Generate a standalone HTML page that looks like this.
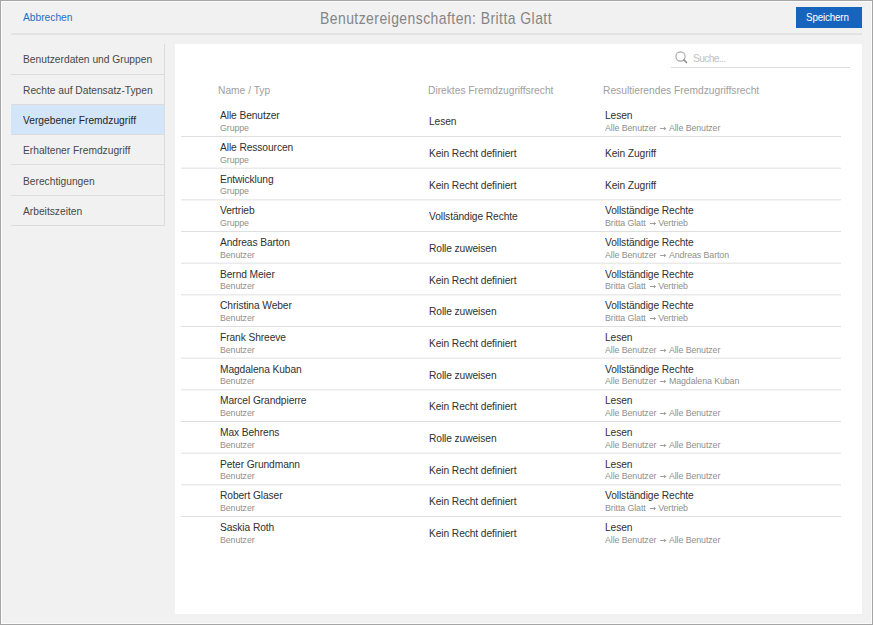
<!DOCTYPE html>
<html><head><meta charset="utf-8"><style>
html,body{margin:0;padding:0;}
body{width:873px;height:625px;overflow:hidden;position:relative;background:#f1f1f1;font-family:"Liberation Sans",sans-serif;}
.frame{position:absolute;left:0;top:0;width:871px;height:623px;border:1px solid #a5a5a5;}
.frame2{position:absolute;left:1px;top:1px;width:869px;height:621px;border:1px solid #fbfbfb;}
.t{position:absolute;white-space:nowrap;line-height:1;}
.hl{position:absolute;height:1px;}
.vl{position:absolute;width:1px;}
.abb{color:#1f6fc6;letter-spacing:0px;transform:scaleX(0.93);transform-origin:0 0;}
.title{color:#858585;letter-spacing:0.55px;transform:scaleX(0.82);transform-origin:0 0;}
.btn{position:absolute;left:796px;top:7px;width:66px;height:21px;background:#1764be;}
.btxt{color:#fff;letter-spacing:-0.2px;transform:scaleX(0.93);transform-origin:0 0;}
.selt{color:#262626 !important;}
.side{color:#484848;letter-spacing:0px;transform:scaleX(0.93);transform-origin:0 0;}
.hdr{color:#9e9e9e;letter-spacing:0px;transform:scaleX(0.93);transform-origin:0 0;}
.nm{color:#303030;letter-spacing:-0.1px;transform:scaleX(0.93);transform-origin:0 0;}
.sub{color:#8f8f8f;letter-spacing:-0.1px;transform:scaleX(0.93);transform-origin:0 0;}
.arr{vertical-align:0px;}
.ph{color:#c0c0c0;letter-spacing:-0.7px;transform:scaleX(0.93);transform-origin:0 0;}
</style></head><body>
<div class="frame"></div><div class="frame2"></div>

<div class="t abb" style="left:22.6px;top:11.69px;font-size:11px;">Abbrechen</div>
<div class="t title" style="left:320px;top:10.31px;font-size:17px;">Benutzereigenschaften: Britta Glatt</div>
<div class="btn"></div>
<div class="t btxt" style="left:806px;top:12.03px;font-size:10.6px;">Speichern</div>
<div class="hl" style="left:11px;top:33px;width:851px;background:rgba(0,0,0,0.050)"></div><div class="hl" style="left:11px;top:34px;width:851px;background:rgba(0,0,0,0.060)"></div>
<div class="hl" style="left:11px;top:74px;width:153px;background:#dcdcdc"></div>
<div class="t side" style="left:22.5px;top:54.19px;font-size:11px;">Benutzerdaten und Gruppen</div>
<div class="hl" style="left:11px;top:104px;width:153px;background:#dcdcdc"></div>
<div class="t side" style="left:22.5px;top:85.19px;font-size:11px;">Rechte auf Datensatz-Typen</div>
<div style="position:absolute;left:11px;top:105px;width:153px;height:29px;background:#d2e5f9"></div>
<div class="hl" style="left:11px;top:134px;width:153px;background:#dcdcdc"></div>
<div class="t side selt" style="left:22.5px;top:115.19px;font-size:11px;">Vergebener Fremdzugriff</div>
<div class="hl" style="left:11px;top:164px;width:153px;background:#dcdcdc"></div>
<div class="t side" style="left:22.5px;top:145.19px;font-size:11px;">Erhaltener Fremdzugriff</div>
<div class="hl" style="left:11px;top:195px;width:153px;background:#dcdcdc"></div>
<div class="t side" style="left:22.5px;top:176.19px;font-size:11px;">Berechtigungen</div>
<div class="hl" style="left:11px;top:225px;width:153px;background:#dcdcdc"></div>
<div class="t side" style="left:22.5px;top:206.19px;font-size:11px;">Arbeitszeiten</div>
<div class="vl" style="left:164px;top:44px;height:182px;background:#dcdcdc"></div>
<div style="position:absolute;left:175px;top:44px;width:687px;height:570px;background:#fff"></div>
<svg style="position:absolute;left:670px;top:47px" width="22" height="20" viewBox="0 0 22 20"><circle cx="10.5" cy="9.5" r="4.6" fill="none" stroke="#a4a4a4" stroke-width="1.1"/><line x1="13.4" y1="12.4" x2="16.9" y2="15.9" stroke="#8e8e8e" stroke-width="1.5"/></svg>
<div class="t ph" style="left:693px;top:53.29px;font-size:11px;">Suche...</div>
<div class="hl" style="left:671px;top:67px;width:179px;background:#dcdcdc"></div>
<div class="t hdr" style="left:218px;top:84.69px;font-size:11px;">Name / Typ</div>
<div class="t hdr" style="left:428px;top:84.69px;font-size:11px;">Direktes Fremdzugriffsrecht</div>
<div class="t hdr" style="left:603px;top:84.69px;font-size:11px;">Resultierendes Fremdzugriffsrecht</div>
<div class="t nm" style="left:220px;top:110.19px;font-size:11px;">Alle Benutzer</div>
<div class="t sub" style="left:220px;top:122.96px;font-size:9.5px;">Gruppe</div>
<div class="t nm" style="left:429px;top:116.19px;font-size:11px;">Lesen</div>
<div class="t nm" style="left:604.6px;top:110.19px;font-size:11px;">Lesen</div>
<div class="t sub" style="left:605.2px;top:122.96px;font-size:9.5px;">Alle Benutzer<svg class="arr" width="13.5" height="6" viewBox="0 0 13.5 6"><path d="M4.3 3.5H10.2M8.5 1.9L10.2 3.5L8.5 5.1" stroke="#8f8f8f" fill="none" stroke-width="0.9"/></svg>Alle Benutzer</div>
<div class="hl" style="left:181px;top:136px;width:660px;background:rgba(0,0,0,0.125)"></div>
<div class="t nm" style="left:220px;top:141.86px;font-size:11px;">Alle Ressourcen</div>
<div class="t sub" style="left:220px;top:154.63px;font-size:9.5px;">Gruppe</div>
<div class="t nm" style="left:429px;top:147.86px;font-size:11px;">Kein Recht definiert</div>
<div class="t nm" style="left:604.6px;top:147.86px;font-size:11px;">Kein Zugriff</div>
<div class="hl" style="left:181px;top:167px;width:660px;background:rgba(0,0,0,0.042)"></div><div class="hl" style="left:181px;top:168px;width:660px;background:rgba(0,0,0,0.083)"></div>
<div class="t nm" style="left:220px;top:173.52px;font-size:11px;">Entwicklung</div>
<div class="t sub" style="left:220px;top:186.29px;font-size:9.5px;">Gruppe</div>
<div class="t nm" style="left:429px;top:179.52px;font-size:11px;">Kein Recht definiert</div>
<div class="t nm" style="left:604.6px;top:179.52px;font-size:11px;">Kein Zugriff</div>
<div class="hl" style="left:181px;top:199px;width:660px;background:rgba(0,0,0,0.083)"></div><div class="hl" style="left:181px;top:200px;width:660px;background:rgba(0,0,0,0.042)"></div>
<div class="t nm" style="left:220px;top:205.19px;font-size:11px;">Vertrieb</div>
<div class="t sub" style="left:220px;top:217.96px;font-size:9.5px;">Gruppe</div>
<div class="t nm" style="left:429px;top:211.19px;font-size:11px;">Vollständige Rechte</div>
<div class="t nm" style="left:604.6px;top:205.19px;font-size:11px;">Vollständige Rechte</div>
<div class="t sub" style="left:605.2px;top:217.96px;font-size:9.5px;">Britta Glatt<svg class="arr" width="13.5" height="6" viewBox="0 0 13.5 6"><path d="M4.3 3.5H10.2M8.5 1.9L10.2 3.5L8.5 5.1" stroke="#8f8f8f" fill="none" stroke-width="0.9"/></svg>Vertrieb</div>
<div class="hl" style="left:181px;top:231px;width:660px;background:rgba(0,0,0,0.125)"></div>
<div class="t nm" style="left:220px;top:236.86px;font-size:11px;">Andreas Barton</div>
<div class="t sub" style="left:220px;top:249.63px;font-size:9.5px;">Benutzer</div>
<div class="t nm" style="left:429px;top:242.86px;font-size:11px;">Rolle zuweisen</div>
<div class="t nm" style="left:604.6px;top:236.86px;font-size:11px;">Vollständige Rechte</div>
<div class="t sub" style="left:605.2px;top:249.63px;font-size:9.5px;">Alle Benutzer<svg class="arr" width="13.5" height="6" viewBox="0 0 13.5 6"><path d="M4.3 3.5H10.2M8.5 1.9L10.2 3.5L8.5 5.1" stroke="#8f8f8f" fill="none" stroke-width="0.9"/></svg>Andreas Barton</div>
<div class="hl" style="left:181px;top:262px;width:660px;background:rgba(0,0,0,0.041)"></div><div class="hl" style="left:181px;top:263px;width:660px;background:rgba(0,0,0,0.084)"></div>
<div class="t nm" style="left:220px;top:268.52px;font-size:11px;">Bernd Meier</div>
<div class="t sub" style="left:220px;top:281.29px;font-size:9.5px;">Benutzer</div>
<div class="t nm" style="left:429px;top:274.52px;font-size:11px;">Kein Recht definiert</div>
<div class="t nm" style="left:604.6px;top:268.52px;font-size:11px;">Vollständige Rechte</div>
<div class="t sub" style="left:605.2px;top:281.29px;font-size:9.5px;">Britta Glatt<svg class="arr" width="13.5" height="6" viewBox="0 0 13.5 6"><path d="M4.3 3.5H10.2M8.5 1.9L10.2 3.5L8.5 5.1" stroke="#8f8f8f" fill="none" stroke-width="0.9"/></svg>Vertrieb</div>
<div class="hl" style="left:181px;top:294px;width:660px;background:rgba(0,0,0,0.083)"></div><div class="hl" style="left:181px;top:295px;width:660px;background:rgba(0,0,0,0.042)"></div>
<div class="t nm" style="left:220px;top:300.19px;font-size:11px;">Christina Weber</div>
<div class="t sub" style="left:220px;top:312.96px;font-size:9.5px;">Benutzer</div>
<div class="t nm" style="left:429px;top:306.19px;font-size:11px;">Rolle zuweisen</div>
<div class="t nm" style="left:604.6px;top:300.19px;font-size:11px;">Vollständige Rechte</div>
<div class="t sub" style="left:605.2px;top:312.96px;font-size:9.5px;">Britta Glatt<svg class="arr" width="13.5" height="6" viewBox="0 0 13.5 6"><path d="M4.3 3.5H10.2M8.5 1.9L10.2 3.5L8.5 5.1" stroke="#8f8f8f" fill="none" stroke-width="0.9"/></svg>Vertrieb</div>
<div class="hl" style="left:181px;top:326px;width:660px;background:rgba(0,0,0,0.125)"></div>
<div class="t nm" style="left:220px;top:331.86px;font-size:11px;">Frank Shreeve</div>
<div class="t sub" style="left:220px;top:344.63px;font-size:9.5px;">Benutzer</div>
<div class="t nm" style="left:429px;top:337.86px;font-size:11px;">Kein Recht definiert</div>
<div class="t nm" style="left:604.6px;top:331.86px;font-size:11px;">Lesen</div>
<div class="t sub" style="left:605.2px;top:344.63px;font-size:9.5px;">Alle Benutzer<svg class="arr" width="13.5" height="6" viewBox="0 0 13.5 6"><path d="M4.3 3.5H10.2M8.5 1.9L10.2 3.5L8.5 5.1" stroke="#8f8f8f" fill="none" stroke-width="0.9"/></svg>Alle Benutzer</div>
<div class="hl" style="left:181px;top:357px;width:660px;background:rgba(0,0,0,0.041)"></div><div class="hl" style="left:181px;top:358px;width:660px;background:rgba(0,0,0,0.084)"></div>
<div class="t nm" style="left:220px;top:363.52px;font-size:11px;">Magdalena Kuban</div>
<div class="t sub" style="left:220px;top:376.29px;font-size:9.5px;">Benutzer</div>
<div class="t nm" style="left:429px;top:369.52px;font-size:11px;">Rolle zuweisen</div>
<div class="t nm" style="left:604.6px;top:363.52px;font-size:11px;">Vollständige Rechte</div>
<div class="t sub" style="left:605.2px;top:376.29px;font-size:9.5px;">Alle Benutzer<svg class="arr" width="13.5" height="6" viewBox="0 0 13.5 6"><path d="M4.3 3.5H10.2M8.5 1.9L10.2 3.5L8.5 5.1" stroke="#8f8f8f" fill="none" stroke-width="0.9"/></svg>Magdalena Kuban</div>
<div class="hl" style="left:181px;top:389px;width:660px;background:rgba(0,0,0,0.083)"></div><div class="hl" style="left:181px;top:390px;width:660px;background:rgba(0,0,0,0.042)"></div>
<div class="t nm" style="left:220px;top:395.19px;font-size:11px;">Marcel Grandpierre</div>
<div class="t sub" style="left:220px;top:407.96px;font-size:9.5px;">Benutzer</div>
<div class="t nm" style="left:429px;top:401.19px;font-size:11px;">Kein Recht definiert</div>
<div class="t nm" style="left:604.6px;top:395.19px;font-size:11px;">Lesen</div>
<div class="t sub" style="left:605.2px;top:407.96px;font-size:9.5px;">Alle Benutzer<svg class="arr" width="13.5" height="6" viewBox="0 0 13.5 6"><path d="M4.3 3.5H10.2M8.5 1.9L10.2 3.5L8.5 5.1" stroke="#8f8f8f" fill="none" stroke-width="0.9"/></svg>Alle Benutzer</div>
<div class="hl" style="left:181px;top:421px;width:660px;background:rgba(0,0,0,0.125)"></div>
<div class="t nm" style="left:220px;top:426.86px;font-size:11px;">Max Behrens</div>
<div class="t sub" style="left:220px;top:439.63px;font-size:9.5px;">Benutzer</div>
<div class="t nm" style="left:429px;top:432.86px;font-size:11px;">Rolle zuweisen</div>
<div class="t nm" style="left:604.6px;top:426.86px;font-size:11px;">Lesen</div>
<div class="t sub" style="left:605.2px;top:439.63px;font-size:9.5px;">Alle Benutzer<svg class="arr" width="13.5" height="6" viewBox="0 0 13.5 6"><path d="M4.3 3.5H10.2M8.5 1.9L10.2 3.5L8.5 5.1" stroke="#8f8f8f" fill="none" stroke-width="0.9"/></svg>Alle Benutzer</div>
<div class="hl" style="left:181px;top:452px;width:660px;background:rgba(0,0,0,0.041)"></div><div class="hl" style="left:181px;top:453px;width:660px;background:rgba(0,0,0,0.084)"></div>
<div class="t nm" style="left:220px;top:458.53px;font-size:11px;">Peter Grundmann</div>
<div class="t sub" style="left:220px;top:471.30px;font-size:9.5px;">Benutzer</div>
<div class="t nm" style="left:429px;top:464.53px;font-size:11px;">Kein Recht definiert</div>
<div class="t nm" style="left:604.6px;top:458.53px;font-size:11px;">Lesen</div>
<div class="t sub" style="left:605.2px;top:471.30px;font-size:9.5px;">Alle Benutzer<svg class="arr" width="13.5" height="6" viewBox="0 0 13.5 6"><path d="M4.3 3.5H10.2M8.5 1.9L10.2 3.5L8.5 5.1" stroke="#8f8f8f" fill="none" stroke-width="0.9"/></svg>Alle Benutzer</div>
<div class="hl" style="left:181px;top:484px;width:660px;background:rgba(0,0,0,0.083)"></div><div class="hl" style="left:181px;top:485px;width:660px;background:rgba(0,0,0,0.042)"></div>
<div class="t nm" style="left:220px;top:490.19px;font-size:11px;">Robert Glaser</div>
<div class="t sub" style="left:220px;top:502.96px;font-size:9.5px;">Benutzer</div>
<div class="t nm" style="left:429px;top:496.19px;font-size:11px;">Kein Recht definiert</div>
<div class="t nm" style="left:604.6px;top:490.19px;font-size:11px;">Vollständige Rechte</div>
<div class="t sub" style="left:605.2px;top:502.96px;font-size:9.5px;">Britta Glatt<svg class="arr" width="13.5" height="6" viewBox="0 0 13.5 6"><path d="M4.3 3.5H10.2M8.5 1.9L10.2 3.5L8.5 5.1" stroke="#8f8f8f" fill="none" stroke-width="0.9"/></svg>Vertrieb</div>
<div class="hl" style="left:181px;top:516px;width:660px;background:rgba(0,0,0,0.124)"></div>
<div class="t nm" style="left:220px;top:521.86px;font-size:11px;">Saskia Roth</div>
<div class="t sub" style="left:220px;top:534.63px;font-size:9.5px;">Benutzer</div>
<div class="t nm" style="left:429px;top:527.86px;font-size:11px;">Kein Recht definiert</div>
<div class="t nm" style="left:604.6px;top:521.86px;font-size:11px;">Lesen</div>
<div class="t sub" style="left:605.2px;top:534.63px;font-size:9.5px;">Alle Benutzer<svg class="arr" width="13.5" height="6" viewBox="0 0 13.5 6"><path d="M4.3 3.5H10.2M8.5 1.9L10.2 3.5L8.5 5.1" stroke="#8f8f8f" fill="none" stroke-width="0.9"/></svg>Alle Benutzer</div>
</body></html>
